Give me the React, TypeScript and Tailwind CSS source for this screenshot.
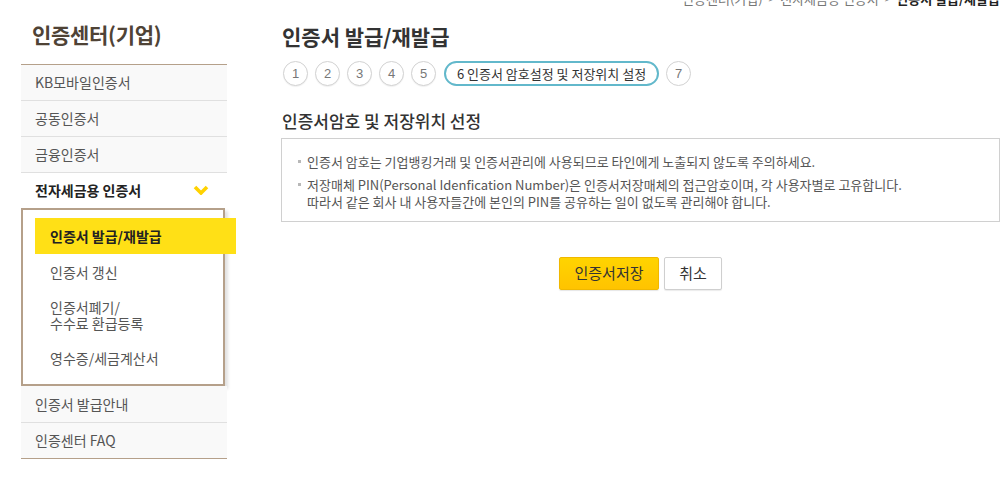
const FONT = "font-['Noto_Sans_CJK_KR','Noto_Sans',sans-serif]";

const menuTop = ['KB모바일인증서', '공동인증서', '금융인증서'];

function Sidebar() {
  return (
    <aside className="ml-[21px] w-[206px] shrink-0">
      <h1 className="flex h-[64px] items-center pl-[11px] pt-[6px] text-[21px] font-bold tracking-[-0.3px] text-[#4f4336]">
        인증센터(기업)
      </h1>
      <ul className="border-t border-[#b5a08a]">
        {menuTop.map((m) => (
          <li key={m} className="flex h-[36px] items-center border-b border-[#e0e0e0] bg-[#f9f9f9] pl-[14px] text-[14px] text-[#555]">
            {m}
          </li>
        ))}
        <li className="relative flex h-[35px] items-center bg-white pl-[14px] text-[14px] font-bold text-[#222]">
          전자세금용 인증서
          <svg className="absolute left-[172px] top-[12px]" width="16" height="10" viewBox="0 0 16 10">
            <polyline points="2,2 8,8 14,2" fill="none" stroke="#ffd200" strokeWidth="3.6" />
          </svg>
        </li>
        <li className="mr-[2px] border-2 border-[#b5a08a] bg-white pb-[9px] pt-[8px] shadow-[3px_3px_3px_rgba(0,0,0,0.12)]">
          <div className="ml-[12px] mr-[-13px] flex h-[36px] items-center bg-[#ffe016] pl-[15px] text-[14px] font-bold text-[#222]">
            인증서 발급/재발급
          </div>
          <div className="pl-[27px] text-[14px] leading-[16px] text-[#555]">
            <p className="py-[9.5px]">인증서 갱신</p>
            <p className="py-[9.5px]">인증서폐기/<br />수수료 환급등록</p>
            <p className="py-[9.5px]">영수증/세금계산서</p>
          </div>
        </li>
        <li className="flex h-[37px] items-center border-b border-[#e0e0e0] bg-[#f9f9f9] pl-[14px] text-[14px] text-[#555]">
          인증서 발급안내
        </li>
        <li className="flex h-[36px] items-center border-b border-[#b5a08a] bg-[#f9f9f9] pl-[14px] text-[14px] text-[#555]">
          인증센터 FAQ
        </li>
      </ul>
    </aside>
  );
}

function Steps() {
  return (
    <div className="mt-[11px] flex items-center gap-[7px] pl-[2px]">
      {[1, 2, 3, 4, 5].map((n) => (
        <span
          key={n}
          className="flex h-[25px] w-[25px] items-center justify-center rounded-full border border-[#d2d2d2] bg-white font-['Liberation_Sans',sans-serif] text-[13px] text-[#777] shadow-[0_1px_1px_rgba(0,0,0,0.06)]"
        >
          {n}
        </span>
      ))}
      <span className="ml-[1px] flex h-[25px] w-[215px] items-center justify-center rounded-full border-2 border-[#62b8cb] bg-white text-[13px] text-[#333]">
        6 인증서 암호설정 및 저장위치 설정
      </span>
      <span className="flex h-[25px] w-[25px] items-center justify-center rounded-full border border-[#d2d2d2] bg-white font-['Liberation_Sans',sans-serif] text-[13px] text-[#777]">
        7
      </span>
    </div>
  );
}

function Bullet({ children }: { children: React.ReactNode }) {
  return (
    <li className="relative pl-[9px]">
      <span className="absolute left-0 top-[7px] h-[3px] w-[3px] bg-[#b8b8b8]" />
      {children}
    </li>
  );
}

export default function App() {
  return (
    <div className={`${FONT} relative h-[483px] w-[1006px] overflow-hidden bg-white`}>
      <div className="absolute right-[6px] top-[-11px] flex items-center gap-[6px] text-[13px] text-[#777]">
        <span>인증센터(기업)</span>
        <span className="text-[10px]">&gt;</span>
        <span>전자세금용 인증서</span>
        <span className="text-[10px]">&gt;</span>
        <span className="font-bold text-[#222]">인증서 발급/재발급</span>
      </div>
      <div className="flex">
        <Sidebar />
        <main className="ml-[54px] w-[719px]">
          <h2 className="pl-[1px] pt-[22px] text-[21px] font-bold leading-[28px] text-[#333]">
            인증서 발급/재발급
          </h2>
          <Steps />
          <h3 className="mt-[24px] pl-[1px] text-[17px] font-medium leading-[22px] text-[#333]">
            인증서암호 및 저장위치 선정
          </h3>
          <div className="mt-[6px] h-[84px] border border-[#d0d0d0] pl-[16px] pt-[14px]">
            <ul className="text-[13px] leading-[17px] text-[#555]">
              <Bullet>인증서 암호는 기업뱅킹거래 및 인증서관리에 사용되므로 타인에게 노출되지 않도록 주의하세요.</Bullet>
              <li className="h-[6px]" />
              <Bullet>
                저장매체 PIN(Personal Idenfication Number)은 인증서저장매체의 접근암호이며, 각 사용자별로 고유합니다.
                <br />
                따라서 같은 회사 내 사용자들간에 본인의 PIN를 공유하는 일이 없도록 관리해야 합니다.
              </Bullet>
            </ul>
          </div>
          <div className="mt-[35px] flex justify-center gap-[5px]">
            <button className="h-[33px] w-[100px] rounded-[2px] border border-[#f0b800] bg-gradient-to-b from-[#ffd400] to-[#ffc300] text-[15px] text-[#333] shadow-[0_1px_1px_rgba(0,0,0,0.1)]">
              인증서저장
            </button>
            <button className="h-[33px] w-[58px] rounded-[2px] border border-[#cfcfcf] bg-white text-[15px] text-[#333] shadow-[0_1px_1px_rgba(0,0,0,0.08)]">
              취소
            </button>
          </div>
        </main>
      </div>
    </div>
  );
}
